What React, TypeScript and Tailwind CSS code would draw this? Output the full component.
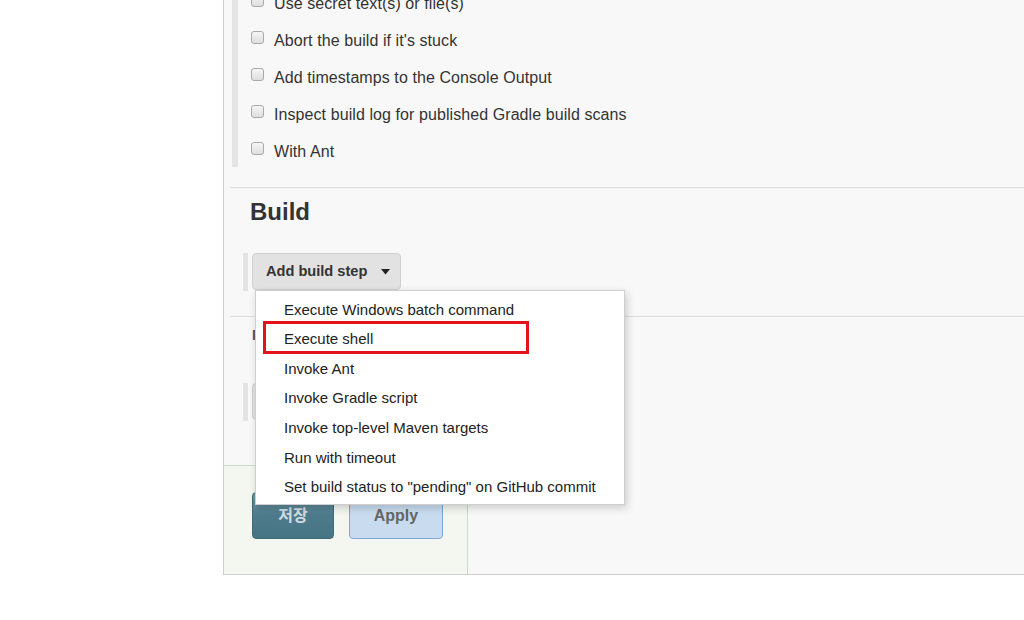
import React from "react";

const options = [
  "Use secret text(s) or file(s)",
  "Abort the build if it's stuck",
  "Add timestamps to the Console Output",
  "Inspect build log for published Gradle build scans",
  "With Ant",
];

const menu = [
  "Execute Windows batch command",
  "Execute shell",
  "Invoke Ant",
  "Invoke Gradle script",
  "Invoke top-level Maven targets",
  "Run with timeout",
  'Set build status to "pending" on GitHub commit',
];

function Checkbox() {
  return (
    <span className="w-[13px] h-[13px] shrink-0 rounded-[3px] border border-[#a9a9a9] bg-gradient-to-b from-[#f6f6f6] to-[#dedede] mt-[-7px]" />
  );
}

export default function App() {
  return (
    <div
      className="w-[1024px] h-[620px] overflow-hidden bg-white flex text-[#333]"
      style={{ fontFamily: '"Liberation Sans", Arial, "Noto Sans CJK KR", sans-serif' }}
    >
      <div className="w-[223px] shrink-0" />
      <div className="flex-1 h-[575px] border-l border-b border-[#cfcfcf] bg-[#f8f8f8] flex flex-col">
        {/* checkboxes */}
        <div className="ml-[8px] mt-[-15px] h-[182px] w-[6px] bg-[#e4e4e4] flex flex-col">
          <div className="flex flex-col w-[600px]">
            {options.map((o) => (
              <div key={o} className="h-[37px] flex items-center pl-[19px] gap-[10px]">
                <Checkbox />
                <span className="text-[16px] tracking-[0.08px] leading-[20px]">{o}</span>
              </div>
            ))}
          </div>
        </div>
        <div className="ml-[6px] mt-[20px] border-t border-[#dcdcdc]" />
        <div className="pl-[26px] mt-[9px] text-[24px] leading-[30px] font-bold text-[#333]">Build</div>
        <div className="ml-[19px] mt-[26px] flex relative">
          <div className="w-[5px] h-[38px] bg-[#e4e4e4]" />
          <button className="ml-[4px] w-[149px] h-[37px] rounded-[4px] border border-[#d0d0d0] bg-[#e2e2e2] flex items-center pl-[13px] gap-[14px] font-bold text-[14.6px] text-[#333]">
            <span>Add build step</span>
            <svg width="9" height="6" viewBox="0 0 9 6">
              <path d="M0 0 H9 L4.5 5.5 Z" fill="#222" />
            </svg>
          </button>
          {/* dropdown */}
          <div className="absolute left-[12px] top-[37px] z-10 w-[370px] h-[215px] bg-white border border-[#cfcfcf] shadow-[2px_3px_8px_rgba(0,0,0,0.18)] pt-[4px]">
            {menu.map((m) => (
              <div key={m} className="h-[29.6px] flex items-center pl-[28px] text-[15px] text-[#222]">
                {m}
              </div>
            ))}
            <div className="absolute left-[7px] top-[30px] w-[266px] h-[33px] border-[3px] border-[#e4121d]" />
          </div>
        </div>
        <div className="ml-[6px] mt-[25px] border-t border-[#dcdcdc]" />
        <div className="pl-[28px] mt-[8px] text-[14px] leading-[20px] font-bold text-[#555]">Post-build Actions</div>
        <div className="ml-[19px] mt-[38px] flex">
          <div className="w-[5px] h-[38px] bg-[#e4e4e4]" />
          <button className="ml-[4px] w-[190px] h-[37px] rounded-[4px] border border-[#d0d0d0] bg-[#e2e2e2] flex items-center pl-[13px] font-bold text-[15px] text-[#333]">
            Add post-build action
          </button>
        </div>
        <div className="mt-auto w-[244px] h-[109px] bg-[#f4f7f0] border-t border-r border-[#c9dcc9] flex items-start pt-[26px] pl-[28px] gap-[15px]">
          <button className="w-[82px] h-[47px] rounded-[4px] bg-gradient-to-b from-[#6f98a6] via-[#4d7b8c] to-[#457485] border border-[#3f6a7a] text-[#cfdde3] font-bold text-[16px]">
            저장
          </button>
          <button className="w-[94px] h-[47px] rounded-[4px] bg-[#c9dcef] border border-[#7fa7d4] text-[#666] font-bold text-[16px]">
            Apply
          </button>
        </div>
      </div>
    </div>
  );
}
